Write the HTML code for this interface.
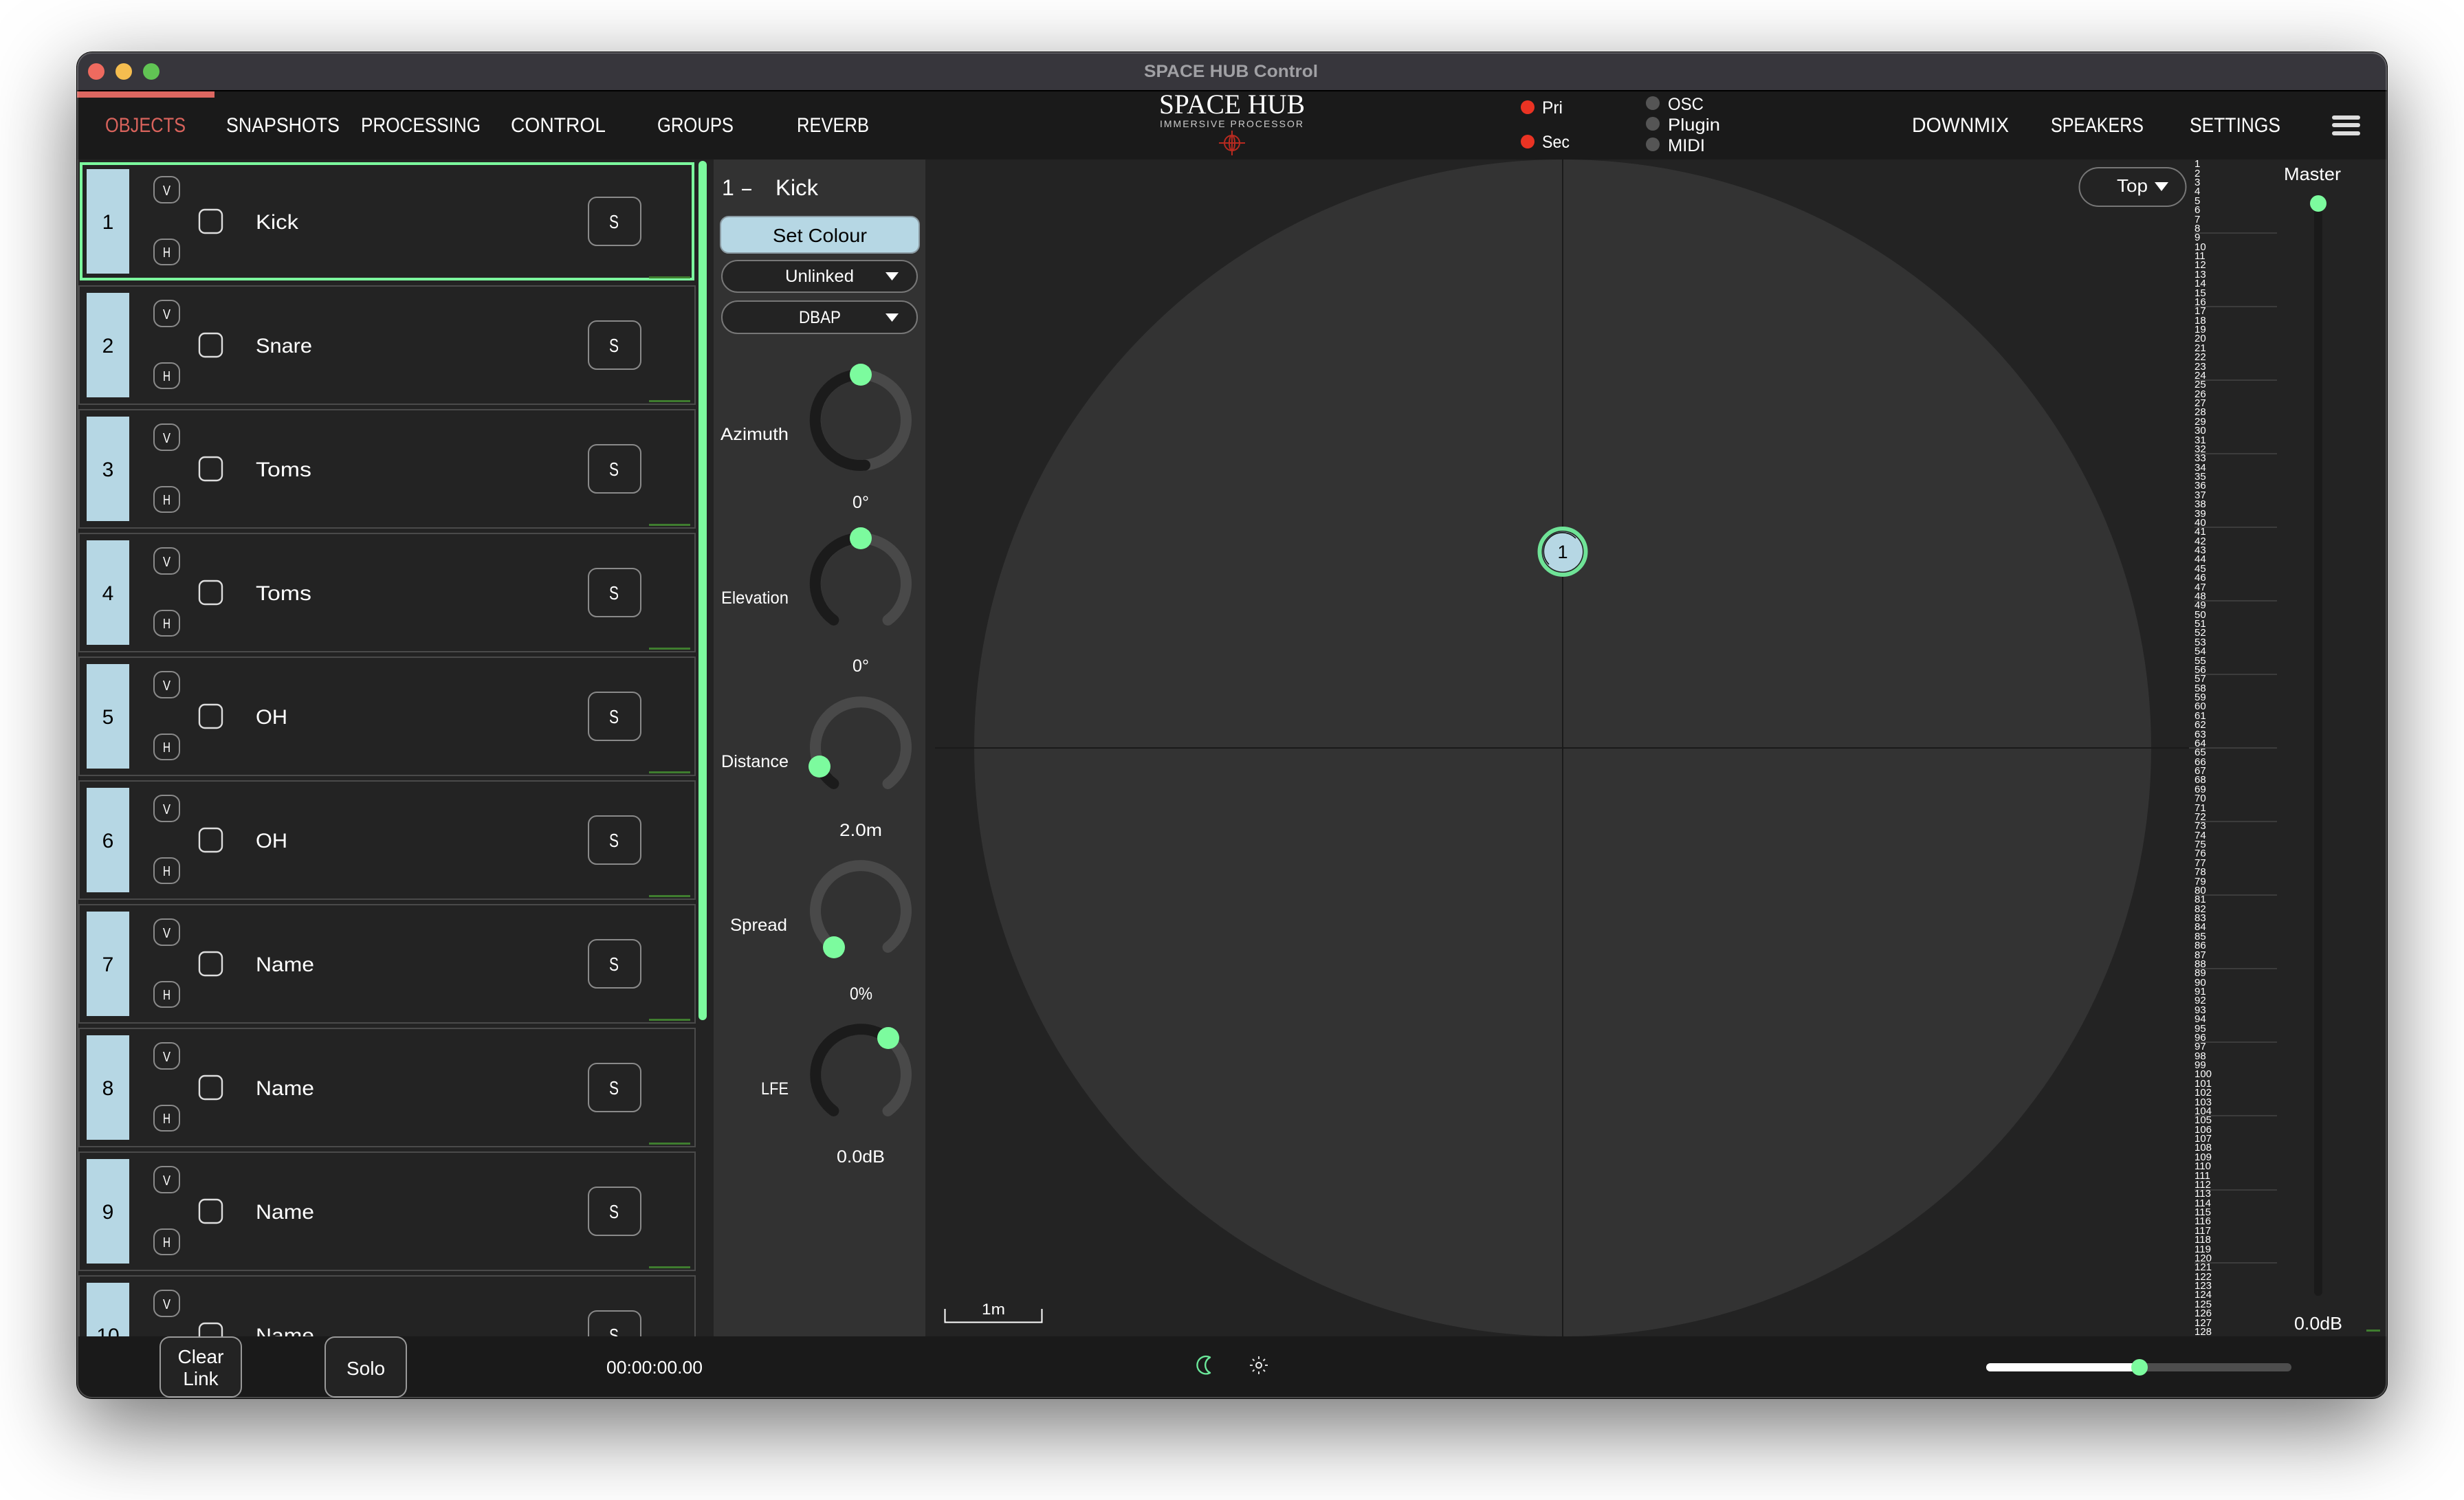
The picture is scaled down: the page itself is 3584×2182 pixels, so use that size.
<!DOCTYPE html>
<html><head><meta charset="utf-8"><title>SPACE HUB Control</title>
<style>
html,body{margin:0;padding:0;width:3584px;height:2182px;background:#fff;overflow:hidden}
#root{position:relative;width:3584px;height:2182px;overflow:hidden;background:#fff}
#shadow{position:absolute;left:112px;top:76px;width:3360px;height:1958px;border-radius:22px;box-shadow:0 40px 120px 4px rgba(0,0,0,.54)}
svg{position:absolute;left:0;top:0}
text{font-family:"Liberation Sans",sans-serif;fill:#fff}
.nav{font-size:30px;}
.rf{fill:#232323;stroke:#4a4a4a;stroke-width:2}
.blk{fill:#b6d7e4}
.vh{fill:none;stroke:#8a8a8a;stroke-width:2}
.cb{fill:none;stroke:#ddd;stroke-width:2.4}
.sb{fill:none;stroke:#8a8a8a;stroke-width:2}
.n{font-size:30px;fill:#000;text-anchor:middle}
.nm{font-size:30px}
.s{font-size:20px;text-anchor:middle}
.sl{font-size:28px;text-anchor:middle}
.gl{fill:#3f7d2f}
.l{font-size:25px}
.v{font-size:25px;text-anchor:middle}
.kl{fill:none;stroke:#494949;stroke-width:16;stroke-linecap:round}
.kd{fill:none;stroke:#1b1b1b;stroke-width:16;stroke-linecap:round}
.h{fill:#7cfb9e}
#m{position:absolute;left:3192px;top:232.3px;font:15px/13.37px "Liberation Sans",sans-serif;color:#fff;white-space:nowrap}
#edge{position:absolute;left:112px;top:76px;width:3360px;height:1958px;border-radius:22px;box-sizing:border-box;box-shadow:0 0 0 1px #000,inset 0 0 0 2px rgba(255,255,255,.2);pointer-events:none}
</style></head>
<body><div id="root">
<div id="shadow"></div>
<svg width="3584" height="2182" viewBox="0 0 3584 2182" xmlns="http://www.w3.org/2000/svg" style="clip-path:inset(76px 112px 148px 112px round 22px)">
<rect x="112" y="76" width="3360" height="1958" fill="#232323"/>
<!-- title bar -->
<rect x="112" y="76" width="3360" height="56" fill="#37363c"/>
<rect x="112" y="131" width="3360" height="2" fill="#000"/>
<circle cx="140" cy="104" r="12" fill="#ee6a5f"/><circle cx="180" cy="104" r="12" fill="#f5bd4f"/><circle cx="220" cy="104" r="12" fill="#61c454"/>
<text x="1664" y="112" font-size="25" font-weight="bold" style="fill:#a0a0a4" textLength="253" lengthAdjust="spacingAndGlyphs">SPACE HUB Control</text>
<!-- nav -->
<rect x="112" y="133" width="3360" height="99" fill="#1a1a1a"/>
<rect x="112" y="133" width="200" height="9" fill="#dd6761"/>
<text class="nav" x="153" y="192" style="fill:#d9635c" textLength="117" lengthAdjust="spacingAndGlyphs">OBJECTS</text>
<text class="nav" x="329" y="192" textLength="165" lengthAdjust="spacingAndGlyphs">SNAPSHOTS</text>
<text class="nav" x="525" y="192" textLength="174" lengthAdjust="spacingAndGlyphs">PROCESSING</text>
<text class="nav" x="743" y="192" textLength="138" lengthAdjust="spacingAndGlyphs">CONTROL</text>
<text class="nav" x="956" y="192" textLength="111" lengthAdjust="spacingAndGlyphs">GROUPS</text>
<text class="nav" x="1159" y="192" textLength="105" lengthAdjust="spacingAndGlyphs">REVERB</text>
<text class="nav" x="2781" y="192" textLength="141" lengthAdjust="spacingAndGlyphs">DOWNMIX</text>
<text class="nav" x="2983" y="192" textLength="135" lengthAdjust="spacingAndGlyphs">SPEAKERS</text>
<text class="nav" x="3185" y="192" textLength="132" lengthAdjust="spacingAndGlyphs">SETTINGS</text>
<rect x="3392" y="168" width="41" height="6" rx="3" fill="#ddd"/><rect x="3392" y="179" width="41" height="6" rx="3" fill="#ddd"/><rect x="3392" y="191" width="41" height="6" rx="3" fill="#ddd"/>
<!-- logo -->
<text x="1686" y="165" font-size="40" style="font-family:'Liberation Serif',serif" textLength="212" lengthAdjust="spacingAndGlyphs">SPACE HUB</text>
<text x="1687" y="185" font-size="14" style="fill:#ccc" textLength="208">IMMERSIVE PROCESSOR</text>
<g fill="none" stroke="#b82a20" stroke-width="2"><circle cx="1792" cy="208" r="11"/><ellipse cx="1792" cy="208" rx="4" ry="11"/><path d="M1773 208H1811M1792 190V226"/></g>
<!-- LEDs -->
<circle cx="2222" cy="156" r="10" fill="#ea3323"/><circle cx="2222" cy="206" r="10" fill="#ea3323"/>
<text x="2243" y="165" font-size="25" textLength="30" lengthAdjust="spacingAndGlyphs">Pri</text>
<text x="2243" y="215" font-size="25" textLength="40" lengthAdjust="spacingAndGlyphs">Sec</text>
<circle cx="2404" cy="150" r="10" fill="#555"/><circle cx="2404" cy="180" r="10" fill="#555"/><circle cx="2404" cy="210" r="10" fill="#555"/>
<text x="2426" y="160" font-size="25" textLength="52" lengthAdjust="spacingAndGlyphs">OSC</text>
<text x="2426" y="190" font-size="25" textLength="76" lengthAdjust="spacingAndGlyphs">Plugin</text>
<text x="2426" y="220" font-size="25" textLength="54" lengthAdjust="spacingAndGlyphs">MIDI</text>

<!-- object rows -->
<g>
<rect class="rf" x="118" y="238" width="890" height="168" style="stroke:#7cfb9e;stroke-width:4"/>
<rect class="blk" x="126" y="246" width="62" height="152"/>
<text class="n" x="157" y="333">1</text>
<rect class="vh" x="224" y="257" width="37" height="38" rx="12"/><text class="s" x="242.5" y="284" textLength="11" lengthAdjust="spacingAndGlyphs">V</text>
<rect class="vh" x="224" y="348" width="37" height="37" rx="12"/><text class="s" x="242.5" y="374" textLength="11" lengthAdjust="spacingAndGlyphs">H</text>
<rect class="cb" x="290" y="305" width="33" height="34" rx="8"/>
<text class="nm" x="372" y="333" textLength="62" lengthAdjust="spacingAndGlyphs">Kick</text>
<rect class="sb" x="856" y="287" width="76" height="70" rx="12"/><text class="sl" x="893" y="332" textLength="14" lengthAdjust="spacingAndGlyphs">S</text>
<rect class="gl" x="944" y="402" width="60" height="3"/>
</g>
<g transform="translate(0,180)">
<rect class="rf" x="115" y="236" width="896" height="172"/>
<rect class="blk" x="126" y="246" width="62" height="152"/>
<text class="n" x="157" y="333">2</text>
<rect class="vh" x="224" y="257" width="37" height="38" rx="12"/><text class="s" x="242.5" y="284" textLength="11" lengthAdjust="spacingAndGlyphs">V</text>
<rect class="vh" x="224" y="348" width="37" height="37" rx="12"/><text class="s" x="242.5" y="374" textLength="11" lengthAdjust="spacingAndGlyphs">H</text>
<rect class="cb" x="290" y="305" width="33" height="34" rx="8"/>
<text class="nm" x="372" y="333" textLength="82" lengthAdjust="spacingAndGlyphs">Snare</text>
<rect class="sb" x="856" y="287" width="76" height="70" rx="12"/><text class="sl" x="893" y="332" textLength="14" lengthAdjust="spacingAndGlyphs">S</text>
<rect class="gl" x="944" y="402" width="60" height="3"/>
</g>
<g transform="translate(0,360)">
<rect class="rf" x="115" y="236" width="896" height="172"/>
<rect class="blk" x="126" y="246" width="62" height="152"/>
<text class="n" x="157" y="333">3</text>
<rect class="vh" x="224" y="257" width="37" height="38" rx="12"/><text class="s" x="242.5" y="284" textLength="11" lengthAdjust="spacingAndGlyphs">V</text>
<rect class="vh" x="224" y="348" width="37" height="37" rx="12"/><text class="s" x="242.5" y="374" textLength="11" lengthAdjust="spacingAndGlyphs">H</text>
<rect class="cb" x="290" y="305" width="33" height="34" rx="8"/>
<text class="nm" x="372" y="333" textLength="81" lengthAdjust="spacingAndGlyphs">Toms</text>
<rect class="sb" x="856" y="287" width="76" height="70" rx="12"/><text class="sl" x="893" y="332" textLength="14" lengthAdjust="spacingAndGlyphs">S</text>
<rect class="gl" x="944" y="402" width="60" height="3"/>
</g>
<g transform="translate(0,540)">
<rect class="rf" x="115" y="236" width="896" height="172"/>
<rect class="blk" x="126" y="246" width="62" height="152"/>
<text class="n" x="157" y="333">4</text>
<rect class="vh" x="224" y="257" width="37" height="38" rx="12"/><text class="s" x="242.5" y="284" textLength="11" lengthAdjust="spacingAndGlyphs">V</text>
<rect class="vh" x="224" y="348" width="37" height="37" rx="12"/><text class="s" x="242.5" y="374" textLength="11" lengthAdjust="spacingAndGlyphs">H</text>
<rect class="cb" x="290" y="305" width="33" height="34" rx="8"/>
<text class="nm" x="372" y="333" textLength="81" lengthAdjust="spacingAndGlyphs">Toms</text>
<rect class="sb" x="856" y="287" width="76" height="70" rx="12"/><text class="sl" x="893" y="332" textLength="14" lengthAdjust="spacingAndGlyphs">S</text>
<rect class="gl" x="944" y="402" width="60" height="3"/>
</g>
<g transform="translate(0,720)">
<rect class="rf" x="115" y="236" width="896" height="172"/>
<rect class="blk" x="126" y="246" width="62" height="152"/>
<text class="n" x="157" y="333">5</text>
<rect class="vh" x="224" y="257" width="37" height="38" rx="12"/><text class="s" x="242.5" y="284" textLength="11" lengthAdjust="spacingAndGlyphs">V</text>
<rect class="vh" x="224" y="348" width="37" height="37" rx="12"/><text class="s" x="242.5" y="374" textLength="11" lengthAdjust="spacingAndGlyphs">H</text>
<rect class="cb" x="290" y="305" width="33" height="34" rx="8"/>
<text class="nm" x="372" y="333" textLength="46" lengthAdjust="spacingAndGlyphs">OH</text>
<rect class="sb" x="856" y="287" width="76" height="70" rx="12"/><text class="sl" x="893" y="332" textLength="14" lengthAdjust="spacingAndGlyphs">S</text>
<rect class="gl" x="944" y="402" width="60" height="3"/>
</g>
<g transform="translate(0,900)">
<rect class="rf" x="115" y="236" width="896" height="172"/>
<rect class="blk" x="126" y="246" width="62" height="152"/>
<text class="n" x="157" y="333">6</text>
<rect class="vh" x="224" y="257" width="37" height="38" rx="12"/><text class="s" x="242.5" y="284" textLength="11" lengthAdjust="spacingAndGlyphs">V</text>
<rect class="vh" x="224" y="348" width="37" height="37" rx="12"/><text class="s" x="242.5" y="374" textLength="11" lengthAdjust="spacingAndGlyphs">H</text>
<rect class="cb" x="290" y="305" width="33" height="34" rx="8"/>
<text class="nm" x="372" y="333" textLength="46" lengthAdjust="spacingAndGlyphs">OH</text>
<rect class="sb" x="856" y="287" width="76" height="70" rx="12"/><text class="sl" x="893" y="332" textLength="14" lengthAdjust="spacingAndGlyphs">S</text>
<rect class="gl" x="944" y="402" width="60" height="3"/>
</g>
<g transform="translate(0,1080)">
<rect class="rf" x="115" y="236" width="896" height="172"/>
<rect class="blk" x="126" y="246" width="62" height="152"/>
<text class="n" x="157" y="333">7</text>
<rect class="vh" x="224" y="257" width="37" height="38" rx="12"/><text class="s" x="242.5" y="284" textLength="11" lengthAdjust="spacingAndGlyphs">V</text>
<rect class="vh" x="224" y="348" width="37" height="37" rx="12"/><text class="s" x="242.5" y="374" textLength="11" lengthAdjust="spacingAndGlyphs">H</text>
<rect class="cb" x="290" y="305" width="33" height="34" rx="8"/>
<text class="nm" x="372" y="333" textLength="85" lengthAdjust="spacingAndGlyphs">Name</text>
<rect class="sb" x="856" y="287" width="76" height="70" rx="12"/><text class="sl" x="893" y="332" textLength="14" lengthAdjust="spacingAndGlyphs">S</text>
<rect class="gl" x="944" y="402" width="60" height="3"/>
</g>
<g transform="translate(0,1260)">
<rect class="rf" x="115" y="236" width="896" height="172"/>
<rect class="blk" x="126" y="246" width="62" height="152"/>
<text class="n" x="157" y="333">8</text>
<rect class="vh" x="224" y="257" width="37" height="38" rx="12"/><text class="s" x="242.5" y="284" textLength="11" lengthAdjust="spacingAndGlyphs">V</text>
<rect class="vh" x="224" y="348" width="37" height="37" rx="12"/><text class="s" x="242.5" y="374" textLength="11" lengthAdjust="spacingAndGlyphs">H</text>
<rect class="cb" x="290" y="305" width="33" height="34" rx="8"/>
<text class="nm" x="372" y="333" textLength="85" lengthAdjust="spacingAndGlyphs">Name</text>
<rect class="sb" x="856" y="287" width="76" height="70" rx="12"/><text class="sl" x="893" y="332" textLength="14" lengthAdjust="spacingAndGlyphs">S</text>
<rect class="gl" x="944" y="402" width="60" height="3"/>
</g>
<g transform="translate(0,1440)">
<rect class="rf" x="115" y="236" width="896" height="172"/>
<rect class="blk" x="126" y="246" width="62" height="152"/>
<text class="n" x="157" y="333">9</text>
<rect class="vh" x="224" y="257" width="37" height="38" rx="12"/><text class="s" x="242.5" y="284" textLength="11" lengthAdjust="spacingAndGlyphs">V</text>
<rect class="vh" x="224" y="348" width="37" height="37" rx="12"/><text class="s" x="242.5" y="374" textLength="11" lengthAdjust="spacingAndGlyphs">H</text>
<rect class="cb" x="290" y="305" width="33" height="34" rx="8"/>
<text class="nm" x="372" y="333" textLength="85" lengthAdjust="spacingAndGlyphs">Name</text>
<rect class="sb" x="856" y="287" width="76" height="70" rx="12"/><text class="sl" x="893" y="332" textLength="14" lengthAdjust="spacingAndGlyphs">S</text>
<rect class="gl" x="944" y="402" width="60" height="3"/>
</g>
<g transform="translate(0,1620)">
<rect class="rf" x="115" y="236" width="896" height="172"/>
<rect class="blk" x="126" y="246" width="62" height="152"/>
<text class="n" x="157" y="333">10</text>
<rect class="vh" x="224" y="257" width="37" height="38" rx="12"/><text class="s" x="242.5" y="284" textLength="11" lengthAdjust="spacingAndGlyphs">V</text>
<rect class="cb" x="290" y="305" width="33" height="34" rx="8"/>
<text class="nm" x="372" y="333" textLength="85" lengthAdjust="spacingAndGlyphs">Name</text>
<rect class="sb" x="856" y="287" width="76" height="70" rx="12"/><text class="sl" x="893" y="332" textLength="14" lengthAdjust="spacingAndGlyphs">S</text>
</g>
<!-- scrollbar -->
<rect x="1016" y="234" width="12" height="1250" rx="6" fill="#7cfb9e"/>

<!-- side panel -->
<rect x="1038" y="232" width="308" height="1712" fill="#323232"/>
<text x="1050" y="284" font-size="32">1</text><text x="1079" y="284" font-size="32" textLength="14" lengthAdjust="spacingAndGlyphs">–</text>
<text x="1128" y="284" font-size="32" textLength="62" lengthAdjust="spacingAndGlyphs">Kick</text>
<rect x="1048" y="315" width="289" height="53" rx="12" fill="#b6d7e4" stroke="#8a9aa2" stroke-width="2"/>
<text x="1124" y="352" font-size="28" style="fill:#000" textLength="137" lengthAdjust="spacingAndGlyphs">Set Colour</text>
<rect x="1050" y="379" width="284" height="46" rx="23" fill="#232323" stroke="#777" stroke-width="2"/>
<text x="1142" y="410" font-size="25" textLength="100" lengthAdjust="spacingAndGlyphs">Unlinked</text>
<path d="M1288 396H1307L1297.500 408Z" fill="#fff"/>
<rect x="1050" y="438" width="284" height="47" rx="23" fill="#232323" stroke="#777" stroke-width="2"/>
<text x="1162" y="470" font-size="25" textLength="61" lengthAdjust="spacingAndGlyphs">DBAP</text>
<path d="M1288 456H1307L1297.500 468Z" fill="#fff"/>

<!-- azimuth -->
<circle class="kl" cx="1252" cy="611" r="66"/>
<path class="kd" d="M1258 676.700A66 66 0 1 1 1252 545"/>
<circle class="h" cx="1252" cy="545" r="16"/>
<text class="l" x="1048" y="640" textLength="99" lengthAdjust="spacingAndGlyphs">Azimuth</text><text class="v" x="1252" y="739">0°</text>
<!-- elevation -->
<path class="kl" d="M1212.500 902A66 66 0 1 1 1291.500 902"/>
<path class="kd" d="M1212.500 902A66 66 0 0 1 1252 783"/>
<circle class="h" cx="1252" cy="783" r="16"/>
<text class="l" x="1049" y="878" textLength="98" lengthAdjust="spacingAndGlyphs">Elevation</text><text class="v" x="1252" y="977">0°</text>
<!-- distance -->
<path class="kl" d="M1212.500 1140A66 66 0 1 1 1291.500 1140"/>
<path class="kd" d="M1212.500 1140A66 66 0 0 1 1192 1115"/>
<circle class="h" cx="1192" cy="1115" r="16"/>
<text class="l" x="1049" y="1116" textLength="98" lengthAdjust="spacingAndGlyphs">Distance</text><text x="1221" y="1216" font-size="25" textLength="62" lengthAdjust="spacingAndGlyphs">2.0m</text>
<!-- spread -->
<path class="kl" d="M1212.500 1378A66 66 0 1 1 1291.500 1378"/>
<circle class="h" cx="1213" cy="1378" r="16"/>
<text class="l" x="1062" y="1354" textLength="83" lengthAdjust="spacingAndGlyphs">Spread</text><text x="1236" y="1454" font-size="25" textLength="33" lengthAdjust="spacingAndGlyphs">0%</text>
<!-- lfe -->
<path class="kl" d="M1212.500 1616A66 66 0 1 1 1291.500 1616"/>
<path class="kd" d="M1212.500 1616A66 66 0 1 1 1292 1510.500"/>
<circle class="h" cx="1292" cy="1510" r="16"/>
<text class="l" x="1107" y="1592" textLength="40" lengthAdjust="spacingAndGlyphs">LFE</text><text x="1217" y="1691" font-size="25" textLength="70" lengthAdjust="spacingAndGlyphs">0.0dB</text>

<!-- stage -->
<circle cx="2273" cy="1088" r="856" fill="#333"/>
<path d="M2273 232V1944M1360 1088H3184" stroke="#1a1a1a" stroke-width="2" fill="none"/>
<circle cx="2273" cy="802.500" r="33.500" fill="#232323" stroke="#6fe397" stroke-width="6"/>
<circle cx="2273" cy="802.500" r="29" fill="#b6d7e4"/>
<path d="M2253 821A27 27 0 0 1 2292 783" fill="none" stroke="#111" stroke-width="1.600"/>
<text x="2273" y="812" font-size="27" text-anchor="middle" style="fill:#000">1</text>
<rect x="3024.500" y="244" width="155" height="56" rx="28" fill="#232323" stroke="#777" stroke-width="2"/>
<text x="3079" y="279" font-size="26" textLength="45" lengthAdjust="spacingAndGlyphs">Top</text>
<path d="M3134 265H3154L3144 278Z" fill="#fff"/>
<path d="M1374.500 1904V1923.500H1515.500V1904" fill="none" stroke="#fff" stroke-width="2"/>
<text x="1428" y="1912" font-size="22" textLength="34" lengthAdjust="spacingAndGlyphs">1m</text>

<!-- meter -->
<g fill="#3c3c3c">
<rect x="3192" y="338" width="120" height="2"/><rect x="3192" y="445" width="120" height="2"/><rect x="3192" y="552" width="120" height="2"/><rect x="3192" y="659" width="120" height="2"/><rect x="3192" y="766" width="120" height="2"/><rect x="3192" y="873" width="120" height="2"/><rect x="3192" y="980" width="120" height="2"/><rect x="3184" y="1087" width="128" height="2"/><rect x="3192" y="1194" width="120" height="2"/><rect x="3192" y="1301" width="120" height="2"/><rect x="3192" y="1408" width="120" height="2"/><rect x="3192" y="1515" width="120" height="2"/><rect x="3192" y="1622" width="120" height="2"/><rect x="3192" y="1730" width="120" height="2"/><rect x="3192" y="1836" width="120" height="2"/>
</g>
<text x="3322" y="262" font-size="26" textLength="83" lengthAdjust="spacingAndGlyphs">Master</text>
<rect x="3366" y="296" width="12" height="1589" rx="6" fill="#1a1a1a"/>
<circle cx="3372" cy="296" r="12" fill="#7cfb9e"/>
<text x="3337" y="1934" font-size="26" textLength="70" lengthAdjust="spacingAndGlyphs">0.0dB</text>
<rect class="gl" x="3442" y="1934" width="20" height="3"/>

<!-- bottom bar -->
<rect x="112" y="1944" width="3360" height="90" fill="#1a1a1a"/>
<rect x="233" y="1945" width="118" height="87" rx="14" fill="#232323" stroke="#999" stroke-width="2"/>
<text x="292" y="1983" font-size="28" text-anchor="middle">Clear</text><text x="292" y="2015" font-size="28" text-anchor="middle">Link</text>
<rect x="473" y="1945" width="118" height="87" rx="14" fill="#232323" stroke="#999" stroke-width="2"/>
<text x="532" y="2000" font-size="28" text-anchor="middle">Solo</text>
<text x="882" y="1998" font-size="26" textLength="140" lengthAdjust="spacingAndGlyphs">00:00:00.00</text>
<path d="M1760 1974.500A12.700 12.700 0 1 0 1760 1997A12.700 12.700 0 0 1 1760 1974.500Z" fill="none" stroke="#6be89a" stroke-width="2.400" stroke-linejoin="round"/>
<circle cx="1831" cy="1986" r="4" fill="none" stroke="#eee" stroke-width="2"/>
<path d="M1831 1973V1977M1831 1995V1999M1818 1986H1822M1840 1986H1844M1822 1977L1824.500 1979.500M1840 1977L1837.500 1979.500M1822 1995L1824.500 1992.500M1840 1995L1837.500 1992.500" stroke="#ddd" stroke-width="2" fill="none"/>
<rect x="2889" y="1983" width="444" height="12" rx="6" fill="#4e4e4e"/>
<rect x="2889" y="1983" width="223" height="12" rx="6" fill="#fff"/>
<circle cx="3112" cy="1989" r="12" fill="#7cfb9e"/>
</svg>
<div id="m">1<br>2<br>3<br>4<br>5<br>6<br>7<br>8<br>9<br>10<br>11<br>12<br>13<br>14<br>15<br>16<br>17<br>18<br>19<br>20<br>21<br>22<br>23<br>24<br>25<br>26<br>27<br>28<br>29<br>30<br>31<br>32<br>33<br>34<br>35<br>36<br>37<br>38<br>39<br>40<br>41<br>42<br>43<br>44<br>45<br>46<br>47<br>48<br>49<br>50<br>51<br>52<br>53<br>54<br>55<br>56<br>57<br>58<br>59<br>60<br>61<br>62<br>63<br>64<br>65<br>66<br>67<br>68<br>69<br>70<br>71<br>72<br>73<br>74<br>75<br>76<br>77<br>78<br>79<br>80<br>81<br>82<br>83<br>84<br>85<br>86<br>87<br>88<br>89<br>90<br>91<br>92<br>93<br>94<br>95<br>96<br>97<br>98<br>99<br>100<br>101<br>102<br>103<br>104<br>105<br>106<br>107<br>108<br>109<br>110<br>111<br>112<br>113<br>114<br>115<br>116<br>117<br>118<br>119<br>120<br>121<br>122<br>123<br>124<br>125<br>126<br>127<br>128</div>
<div id="edge"></div>
</div></body></html>
